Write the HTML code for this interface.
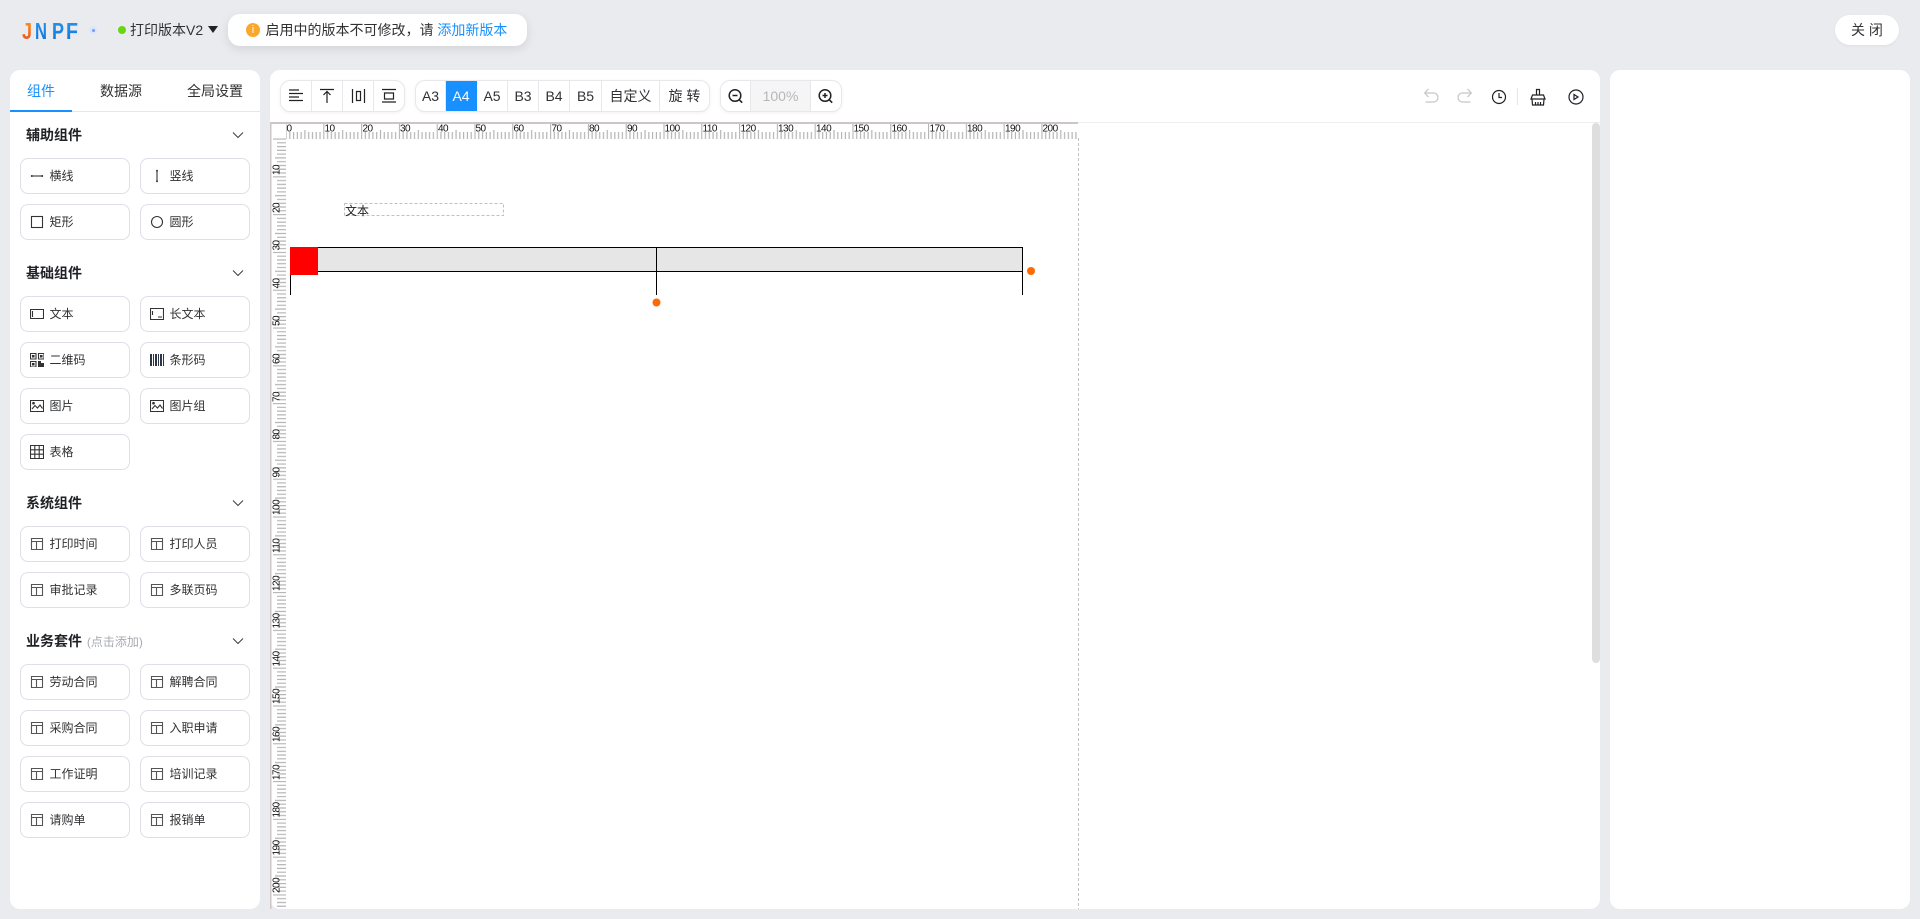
<!DOCTYPE html>
<html lang="zh-CN">
<head>
<meta charset="utf-8">
<title>打印模板设计</title>
<style>
*{box-sizing:border-box}
html,body{margin:0;padding:0;width:1920px;height:919px;overflow:hidden;background:#e9ebef;font-family:"Liberation Sans","Noto Sans CJK SC",sans-serif;color:#303133;font-size:14px}
.a{position:absolute}
.panel{position:absolute;background:#fff;border-radius:10px;top:70px;height:839px}
.tab{position:absolute;top:76px;height:30px;line-height:30px;font-size:14px;white-space:nowrap}
.h{position:absolute;left:26px;font-size:14px;font-weight:700;line-height:20px;color:#1f2124;white-space:nowrap}
.h small{font-size:12px;font-weight:400;color:#a8abb2;margin-left:1px}
.c{position:absolute;left:232px;width:12px;height:8px}
.b{position:absolute;width:110px;height:36px;border:1px solid #dcdfe6;border-radius:8px;background:#fff;font-size:12px;line-height:35px;color:#303133}
.b svg{position:absolute;left:9px;top:10px;width:14px;height:14px;fill:none;stroke:#333;stroke-width:1.1}
.b span{position:absolute;left:28.5px;top:0;white-space:nowrap}
.g{position:absolute;top:80px;height:32px;border:1px solid #e6e8eb;border-radius:10px;background:#fff;box-shadow:0 1px 3px rgba(0,0,0,.06);display:flex;overflow:hidden}
.g div{height:30px;line-height:30px;text-align:center;border-right:1px solid #e6e8eb;font-size:14px;color:#303133;flex:none}
.g div:last-child{border-right:0}
.g .on{background:#1890ff;color:#fff;border-right-color:#1890ff;height:32px;margin-top:-1px;line-height:32px}
</style>
</head>
<body>
<svg class="a" style="left:18px;top:18px" width="66" height="24">
<defs>
<linearGradient id="lj" x1="0" y1="0" x2="0" y2="1"><stop offset="0" stop-color="#ff9a1f"/><stop offset="1" stop-color="#e8481a"/></linearGradient>
<linearGradient id="lb" x1="0" y1="0" x2="0" y2="1"><stop offset="0" stop-color="#2a97ee"/><stop offset="1" stop-color="#0f72d8"/></linearGradient>
</defs>
<text x="4" y="21" font-family="Liberation Sans" font-size="23" font-weight="700" fill="url(#lj)" textLength="10" lengthAdjust="spacingAndGlyphs">J</text>
<text x="17" y="21" font-family="Liberation Sans" font-size="23" font-weight="700" fill="url(#lb)" textLength="12" lengthAdjust="spacingAndGlyphs">N</text>
<text x="34" y="21" font-family="Liberation Sans" font-size="23" font-weight="700" fill="url(#lb)" textLength="12" lengthAdjust="spacingAndGlyphs">P</text>
<text x="48" y="21" font-family="Liberation Sans" font-size="23" font-weight="700" fill="url(#lb)" textLength="12" lengthAdjust="spacingAndGlyphs">F</text>
</svg>
<div class="a" style="left:89px;top:26px;width:8px;height:8px;border-radius:50%;background:#dbe6fb"></div>
<div class="a" style="left:91.5px;top:28.5px;width:3.5px;height:3.5px;border-radius:50%;background:#6f9ff5"></div>
<div class="a" style="left:118px;top:26px;width:8px;height:8px;border-radius:50%;background:#67d711"></div>
<div class="a" style="left:130px;top:20px;line-height:20px;white-space:nowrap;font-size:14px">打印版本V2</div>
<div class="a" style="left:208px;top:26px;width:0;height:0;border-left:5px solid transparent;border-right:5px solid transparent;border-top:7px solid #222"></div>

<div class="a" style="left:228px;top:14px;width:299px;height:32px;background:#fff;border-radius:12px;box-shadow:0 3px 10px rgba(0,0,0,.1)"></div>
<div class="a" style="left:246px;top:23px;width:14px;height:14px;border-radius:50%;background:#faa72c;color:#fff;font-size:11px;line-height:14px;text-align:center">i</div>
<div class="a" style="left:265.5px;top:20px;line-height:20px;white-space:nowrap;font-size:14px">启用中的版本不可修改，请 <span style="color:#1890ff">添加新版本</span></div>

<div class="a" style="left:1835px;top:15px;width:64px;height:30px;border-radius:15px;background:#fff;box-shadow:0 1px 3px rgba(0,0,0,.05);text-align:center;line-height:30px;font-size:14px">关 闭</div>

<div class="panel" style="left:10px;width:250px"></div>
<div class="panel" style="left:270px;width:1330px"></div>
<div class="panel" style="left:1610px;width:300px"></div>

<!-- tabs -->
<div class="tab" style="left:27px;color:#1890ff">组件</div>
<div class="tab" style="left:100px">数据源</div>
<div class="tab" style="left:187px">全局设置</div>
<div class="a" style="left:10px;top:111px;width:250px;height:1px;background:#e4e7ed"></div>
<div class="a" style="left:10px;top:110px;width:62px;height:2px;background:#1890ff"></div>

<svg width="0" height="0" style="position:absolute">
<defs>
<symbol id="tp" viewBox="0 0 14 14"><path d="M1.500 1.500h11v11h-11zM1.500 4.500h11M6.500 4.500v8" fill="none" stroke="#555" stroke-width="1.100"/></symbol>
<symbol id="img" viewBox="0 0 14 14"><path d="M.5 1.500h13v11H.5z" fill="none" stroke="#333" stroke-width="1.100"/><path d="M2 10l3-3.500 2.500 2.500L10 6l2.500 3.500" fill="none" stroke="#333"/><circle cx="3.500" cy="4.200" r=".8" fill="#333"/></symbol>
<symbol id="chev" viewBox="0 0 12 8"><path d="M1 1.500l5 5 5-5" fill="none" stroke="#444" stroke-width="1.100"/></symbol>
</defs>
</svg>

<!-- 辅助组件 -->
<div class="h" style="top:125px">辅助组件</div>
<svg class="c" style="top:131px"><use href="#chev"/></svg>
<div class="b" style="left:20px;top:158px"><svg viewBox="0 0 14 14"><path d="M2 7h10"/><circle cx="1.800" cy="7" r="1" fill="#333" stroke="none"/><circle cx="12.200" cy="7" r="1" fill="#333" stroke="none"/></svg><span>横线</span></div>
<div class="b" style="left:140px;top:158px"><svg viewBox="0 0 14 14"><path d="M7 2v10"/><circle cx="7" cy="1.800" r="1" fill="#333" stroke="none"/><circle cx="7" cy="12.200" r="1" fill="#333" stroke="none"/></svg><span>竖线</span></div>
<div class="b" style="left:20px;top:204px"><svg viewBox="0 0 14 14"><rect x="1.500" y="1.500" width="11" height="11"/></svg><span>矩形</span></div>
<div class="b" style="left:140px;top:204px"><svg viewBox="0 0 14 14"><circle cx="7" cy="7" r="5.500"/></svg><span>圆形</span></div>

<!-- 基础组件 -->
<div class="h" style="top:263px">基础组件</div>
<svg class="c" style="top:269px"><use href="#chev"/></svg>
<div class="b" style="left:20px;top:296px"><svg viewBox="0 0 14 14"><path d="M.5 2.500h13v9H.5zM2.500 4v6"/></svg><span>文本</span></div>
<div class="b" style="left:140px;top:296px"><svg viewBox="0 0 14 14"><path d="M.5 1.500h13v11H.5zM2.500 4v4M8 10h4"/></svg><span>长文本</span></div>
<div class="b" style="left:20px;top:342px"><svg viewBox="0 0 14 14"><path d="M.5.500h5.500v5.500H.5zM8.500.500H14v5.500H8.500zM.5 8.500h5.500V14H.5z"/><path d="M2.500 2.500h1.500v1.500h-1.500zM10.500 2.500H12v1.500h-1.500zM2.500 10.500h1.500V12h-1.500z" fill="#333"/><path d="M8 8h3v2h3v4H8z" fill="#333" stroke="none"/></svg><span>二维码</span></div>
<div class="b" style="left:140px;top:342px"><svg viewBox="0 0 14 14"><path d="M0 1h2v12H0zM3 1h1v12H3zM5 1h2v12H5zM8 1h1v12H8zM10 1h2v12h-2zM13 1h1v12h-1z" fill="#2c3848" stroke="none"/></svg><span>条形码</span></div>
<div class="b" style="left:20px;top:388px"><svg><use href="#img"/></svg><span>图片</span></div>
<div class="b" style="left:140px;top:388px"><svg><use href="#img"/></svg><span>图片组</span></div>
<div class="b" style="left:20px;top:434px"><svg viewBox="0 0 14 14"><path d="M.5.500h13v13H.5zM.5 4.800h13M.5 9.200h13M4.800.500v13M9.200.500v13"/></svg><span>表格</span></div>

<!-- 系统组件 -->
<div class="h" style="top:493px">系统组件</div>
<svg class="c" style="top:499px"><use href="#chev"/></svg>
<div class="b" style="left:20px;top:526px"><svg><use href="#tp"/></svg><span>打印时间</span></div>
<div class="b" style="left:140px;top:526px"><svg><use href="#tp"/></svg><span>打印人员</span></div>
<div class="b" style="left:20px;top:572px"><svg><use href="#tp"/></svg><span>审批记录</span></div>
<div class="b" style="left:140px;top:572px"><svg><use href="#tp"/></svg><span>多联页码</span></div>

<!-- 业务套件 -->
<div class="h" style="top:631px">业务套件 <small>(点击添加)</small></div>
<svg class="c" style="top:637px"><use href="#chev"/></svg>
<div class="b" style="left:20px;top:664px"><svg><use href="#tp"/></svg><span>劳动合同</span></div>
<div class="b" style="left:140px;top:664px"><svg><use href="#tp"/></svg><span>解聘合同</span></div>
<div class="b" style="left:20px;top:710px"><svg><use href="#tp"/></svg><span>采购合同</span></div>
<div class="b" style="left:140px;top:710px"><svg><use href="#tp"/></svg><span>入职申请</span></div>
<div class="b" style="left:20px;top:756px"><svg><use href="#tp"/></svg><span>工作证明</span></div>
<div class="b" style="left:140px;top:756px"><svg><use href="#tp"/></svg><span>培训记录</span></div>
<div class="b" style="left:20px;top:802px"><svg><use href="#tp"/></svg><span>请购单</span></div>
<div class="b" style="left:140px;top:802px"><svg><use href="#tp"/></svg><span>报销单</span></div>

<!-- toolbar groups -->
<div class="g" style="left:280px;width:125px"><div style="width:31px"></div><div style="width:31px"></div><div style="width:31px"></div><div style="width:30px"></div></div>
<div class="g" style="left:415px;width:295px"><div style="width:30px">A3</div><div class="on" style="width:31px">A4</div><div style="width:31px">A5</div><div style="width:31px">B3</div><div style="width:31px">B4</div><div style="width:32px">B5</div><div style="width:58px">自定义</div><div style="width:49px">旋 转</div></div>
<div class="g" style="left:720px;width:122px"><div style="width:30px"></div><div style="width:60px;background:#f5f5f5;color:#b5b7bb">100%</div><div style="width:30px"></div></div>

<!-- toolbar + canvas graphics -->
<svg class="a" style="left:0;top:0" width="1920" height="919">
<defs>
<pattern id="hr" patternUnits="userSpaceOnUse" x="285.5" y="122" width="37.795" height="20">
<path d="M.5 2V17M4.280 10V17M8.060 10V17M11.840 10V17M15.620 10V17M19.400 8V17M23.180 10V17M26.950 10V17M30.730 10V17M34.510 10V17" stroke="#b4b4b4" stroke-width="1.200" fill="none"/>
</pattern>
<pattern id="vr" patternUnits="userSpaceOnUse" x="270" y="138.500" width="20" height="37.795">
<path d="M3 .5H16M7 4.280H16M7 8.060H16M7 11.840H16M7 15.620H16M5 19.400H16M7 23.180H16M7 26.950H16M7 30.730H16M7 34.510H16" stroke="#b4b4b4" stroke-width="1.200" fill="none"/>
</pattern>
</defs>

<g fill="none" stroke="#222" stroke-width="1.200">
<path d="M289 90h10M289 93.500h14M289 97h10M289 100.500h14"/>
<path d="M320 89.500h14M327 103V92M323.500 95l3.500-3.500 3.500 3.500"/>
<path d="M352.500 89v14M364.500 89v14M356.500 91.500h4v9h-4z"/>
<path d="M382 89.500h14M382 102h14M384.500 93h9v6h-9z"/>
</g>
<g fill="none" stroke="#222" stroke-width="1.500">
<circle cx="735" cy="95.500" r="5.800"/><path d="M739.200 99.700l3 3M732.500 95.500h5"/>
<circle cx="825" cy="95.500" r="5.800"/><path d="M829.200 99.700l3 3M822.500 95.500h5M825 93v5"/>
</g>

<g fill="none" stroke="#c4c6ca" stroke-width="1.200">
<path d="M1424.500 93l4-4M1424.500 93l4 4M1424.500 93h9a4.500 4.500 0 0 1 0 9h-8"/>
<path d="M1471.500 93l-4-4M1471.500 93l-4 4M1471.500 93h-9a4.500 4.500 0 0 0 0 9h8"/>
</g>
<g fill="none" stroke="#1f2226" stroke-width="1.200">
<circle cx="1499" cy="97" r="6.500"/><path d="M1499 93v4.500h3"/>
<path d="M1536.500 95v-5.500h3V95M1531 99l1.500-4h11l1.500 4zM1532 99l.5 6h11l.5-6M1535.500 102v3M1538 102v3M1540.500 102v3"/>
<circle cx="1576" cy="97" r="7"/><path d="M1574 94.500v5l4-2.500z"/>
</g>
<path d="M1517.500 88v17" stroke="#e4e7ed"/>

<!-- light border under toolbar -->
<rect x="1078" y="122" width="522" height="1" fill="#eeeeee"/>

<!-- rulers -->
<rect x="286" y="122" width="792" height="20" fill="url(#hr)"/>
<rect x="270" y="138" width="20" height="771" fill="url(#vr)"/>
<rect x="270" y="122" width="808" height="2" fill="#cdc6c6"/>
<rect x="270" y="122" width="1.500" height="787" fill="#cdc6c6"/>

<g font-family="Liberation Sans" font-size="10" letter-spacing="-.5" fill="#111">
<text x="286.500" y="131.500">0</text><text x="324.500" y="131.500">10</text><text x="362.500" y="131.500">20</text><text x="400" y="131.500">30</text><text x="438" y="131.500">40</text><text x="475.500" y="131.500">50</text><text x="513.500" y="131.500">60</text><text x="551.500" y="131.500">70</text><text x="589" y="131.500">80</text><text x="627" y="131.500">90</text><text x="664.500" y="131.500">100</text><text x="702.500" y="131.500">110</text><text x="740.500" y="131.500">120</text><text x="778" y="131.500">130</text><text x="816" y="131.500">140</text><text x="853.500" y="131.500">150</text><text x="891.500" y="131.500">160</text><text x="929.500" y="131.500">170</text><text x="967" y="131.500">180</text><text x="1005" y="131.500">190</text><text x="1042.500" y="131.500">200</text>
<text transform="translate(279.500 175) rotate(-90)">10</text>
<text transform="translate(279.500 213) rotate(-90)">20</text>
<text transform="translate(279.500 250.500) rotate(-90)">30</text>
<text transform="translate(279.500 288.500) rotate(-90)">40</text>
<text transform="translate(279.500 326) rotate(-90)">50</text>
<text transform="translate(279.500 364) rotate(-90)">60</text>
<text transform="translate(279.500 402) rotate(-90)">70</text>
<text transform="translate(279.500 439.500) rotate(-90)">80</text>
<text transform="translate(279.500 477.500) rotate(-90)">90</text>
<text transform="translate(279.500 515) rotate(-90)">100</text>
<text transform="translate(279.500 553) rotate(-90)">110</text>
<text transform="translate(279.500 591) rotate(-90)">120</text>
<text transform="translate(279.500 628.500) rotate(-90)">130</text>
<text transform="translate(279.500 666.500) rotate(-90)">140</text>
<text transform="translate(279.500 704) rotate(-90)">150</text>
<text transform="translate(279.500 742) rotate(-90)">160</text>
<text transform="translate(279.500 780) rotate(-90)">170</text>
<text transform="translate(279.500 817.500) rotate(-90)">180</text>
<text transform="translate(279.500 855.500) rotate(-90)">190</text>
<text transform="translate(279.500 893) rotate(-90)">200</text>
</g>

<!-- page dashed edge -->
<path d="M1078.500 138V909" stroke="#c2c2c2" stroke-dasharray="3 2" fill="none"/>

<!-- text element -->
<rect x="344.500" y="203.500" width="159" height="12" fill="none" stroke="#c9bcbc" stroke-dasharray="3 2"/>
<text x="345" y="215" font-family="Liberation Sans,Noto Sans CJK SC,sans-serif" font-size="12" fill="#222">文本</text>

<!-- table element -->
<rect x="290" y="247" width="733" height="25" fill="#e6e6e6"/>
<path d="M290 247.500H1023M290 271.500H1023M290.500 247V295M656.500 247V295M1022.500 247V295" stroke="#000" fill="none"/>
<rect x="290" y="247" width="28" height="28" fill="#f00"/>
<circle cx="1031" cy="271" r="4" fill="#ff6a00"/>
<circle cx="656.500" cy="302.500" r="4" fill="#ff6a00"/>

<!-- scrollbar -->
<rect x="1592" y="123" width="8" height="540" rx="4" fill="#dedede"/>
</svg>
</body>
</html>
